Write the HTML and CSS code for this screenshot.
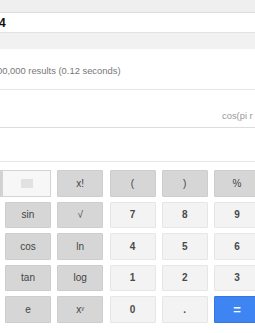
FILE: index.html
```
<!DOCTYPE html>
<html>
<head>
<meta charset="utf-8">
<link rel="stylesheet" href="styles.css">
</head>
<body>
<div class="page">
  <div class="topbar"></div>
  <div class="query"><span class="q">4</span></div>
  <div class="tabs"></div>
  <div class="stats">00,000 results (0.12 seconds)</div>
  <div class="expr"><span class="expr-text">cos(pi r</span></div>
  <div class="result"></div>
  <div class="keypad">
    <div class="seg"><div class="seg-rad"></div><div class="seg-deg"><span class="dots"></span></div></div>
    <div class="key fn">x!</div>
    <div class="key fn">(</div>
    <div class="key fn">)</div>
    <div class="key fn">%</div>

    <div class="key fn">sin</div>
    <div class="key fn">√</div>
    <div class="key num">7</div>
    <div class="key num">8</div>
    <div class="key num">9</div>

    <div class="key fn">cos</div>
    <div class="key fn">ln</div>
    <div class="key num">4</div>
    <div class="key num">5</div>
    <div class="key num">6</div>

    <div class="key fn">tan</div>
    <div class="key fn">log</div>
    <div class="key num">1</div>
    <div class="key num">2</div>
    <div class="key num">3</div>

    <div class="key fn">e</div>
    <div class="key fn">x<sup>y</sup></div>
    <div class="key num">0</div>
    <div class="key num">.</div>
    <div class="key eq">=</div>
  </div>
</div>
</body>
</html>
```
FILE: styles.css
```
html, body {
  margin: 0;
  padding: 0;
  background: #fff;
}
body {
  font-family: "Liberation Sans", Arial, sans-serif;
  width: 255px;
  height: 333px;
  overflow: hidden;
}
.page {
  width: 255px;
  overflow: hidden;
}
.topbar {
  height: 12px;
  background: #efefef;
  border-bottom: 1px solid #dcdcdc;
}
.query {
  height: 19px;
  background: #fff;
  border-bottom: 1px solid #e2e2e2;
  display: flex;
  align-items: center;
}
.q {
  font-size: 12px;
  font-weight: bold;
  color: #111;
  margin-left: -1px;
}
.tabs {
  height: 16px;
  background: #f1f1f1;
}
.stats {
  height: 41px;
  box-sizing: border-box;
  padding-top: 16px;
  font-size: 9.4px;
  line-height: 12px;
  color: #777;
  margin-left: -3px;
  white-space: nowrap;
  border-bottom: 1px solid #e6e6e6;
}
.expr {
  height: 38px;
  box-sizing: border-box;
  padding-top: 20px;
  padding-left: 222px;
  font-size: 9.4px;
  line-height: 12px;
  color: #999;
  white-space: nowrap;
  overflow: hidden;
  border-bottom: 1px solid #dcdcdc;
}
.result {
  height: 33px;
  border-bottom: 1px solid #e6e6e6;
}
.keypad {
  display: grid;
  grid-template-columns: repeat(5, 46px);
  grid-auto-rows: 26.5px;
  column-gap: 6.25px;
  row-gap: 5px;
  padding: 8px 0 0 5px;
}
.key {
  box-sizing: border-box;
  display: flex;
  align-items: center;
  justify-content: center;
  font-size: 10px;
  color: #444;
  border-radius: 1px;
}
.fn {
  background: #d6d6d6;
  border: 1px solid #cdcdcd;
}
.num {
  background: #f3f3f3;
  border: 1px solid #e6e6e6;
  font-weight: bold;
  color: #4a4a4a;
}
.eq {
  background: #3e84f3;
  border: 1px solid #3576e0;
  color: #fff;
  font-weight: bold;
  font-size: 13px;
}
.key sup {
  font-size: 6px;
  vertical-align: top;
  line-height: 1;
  margin-top: -2px;
}
.seg {
  display: flex;
  margin-left: -5px;
}
.seg-rad {
  width: 2px;
  background: #d2d2d2;
}
.seg-deg {
  flex: 1;
  box-sizing: border-box;
  background: #f7f7f7;
  border: 1px solid #d4d4d4;
  display: flex;
  align-items: center;
  justify-content: center;
}
.dots {
  width: 12px;
  height: 9px;
  background-image: radial-gradient(circle at 1px 1px, #c8c8c8 0.6px, transparent 0.8px);
  background-size: 2px 2px;
}
```
